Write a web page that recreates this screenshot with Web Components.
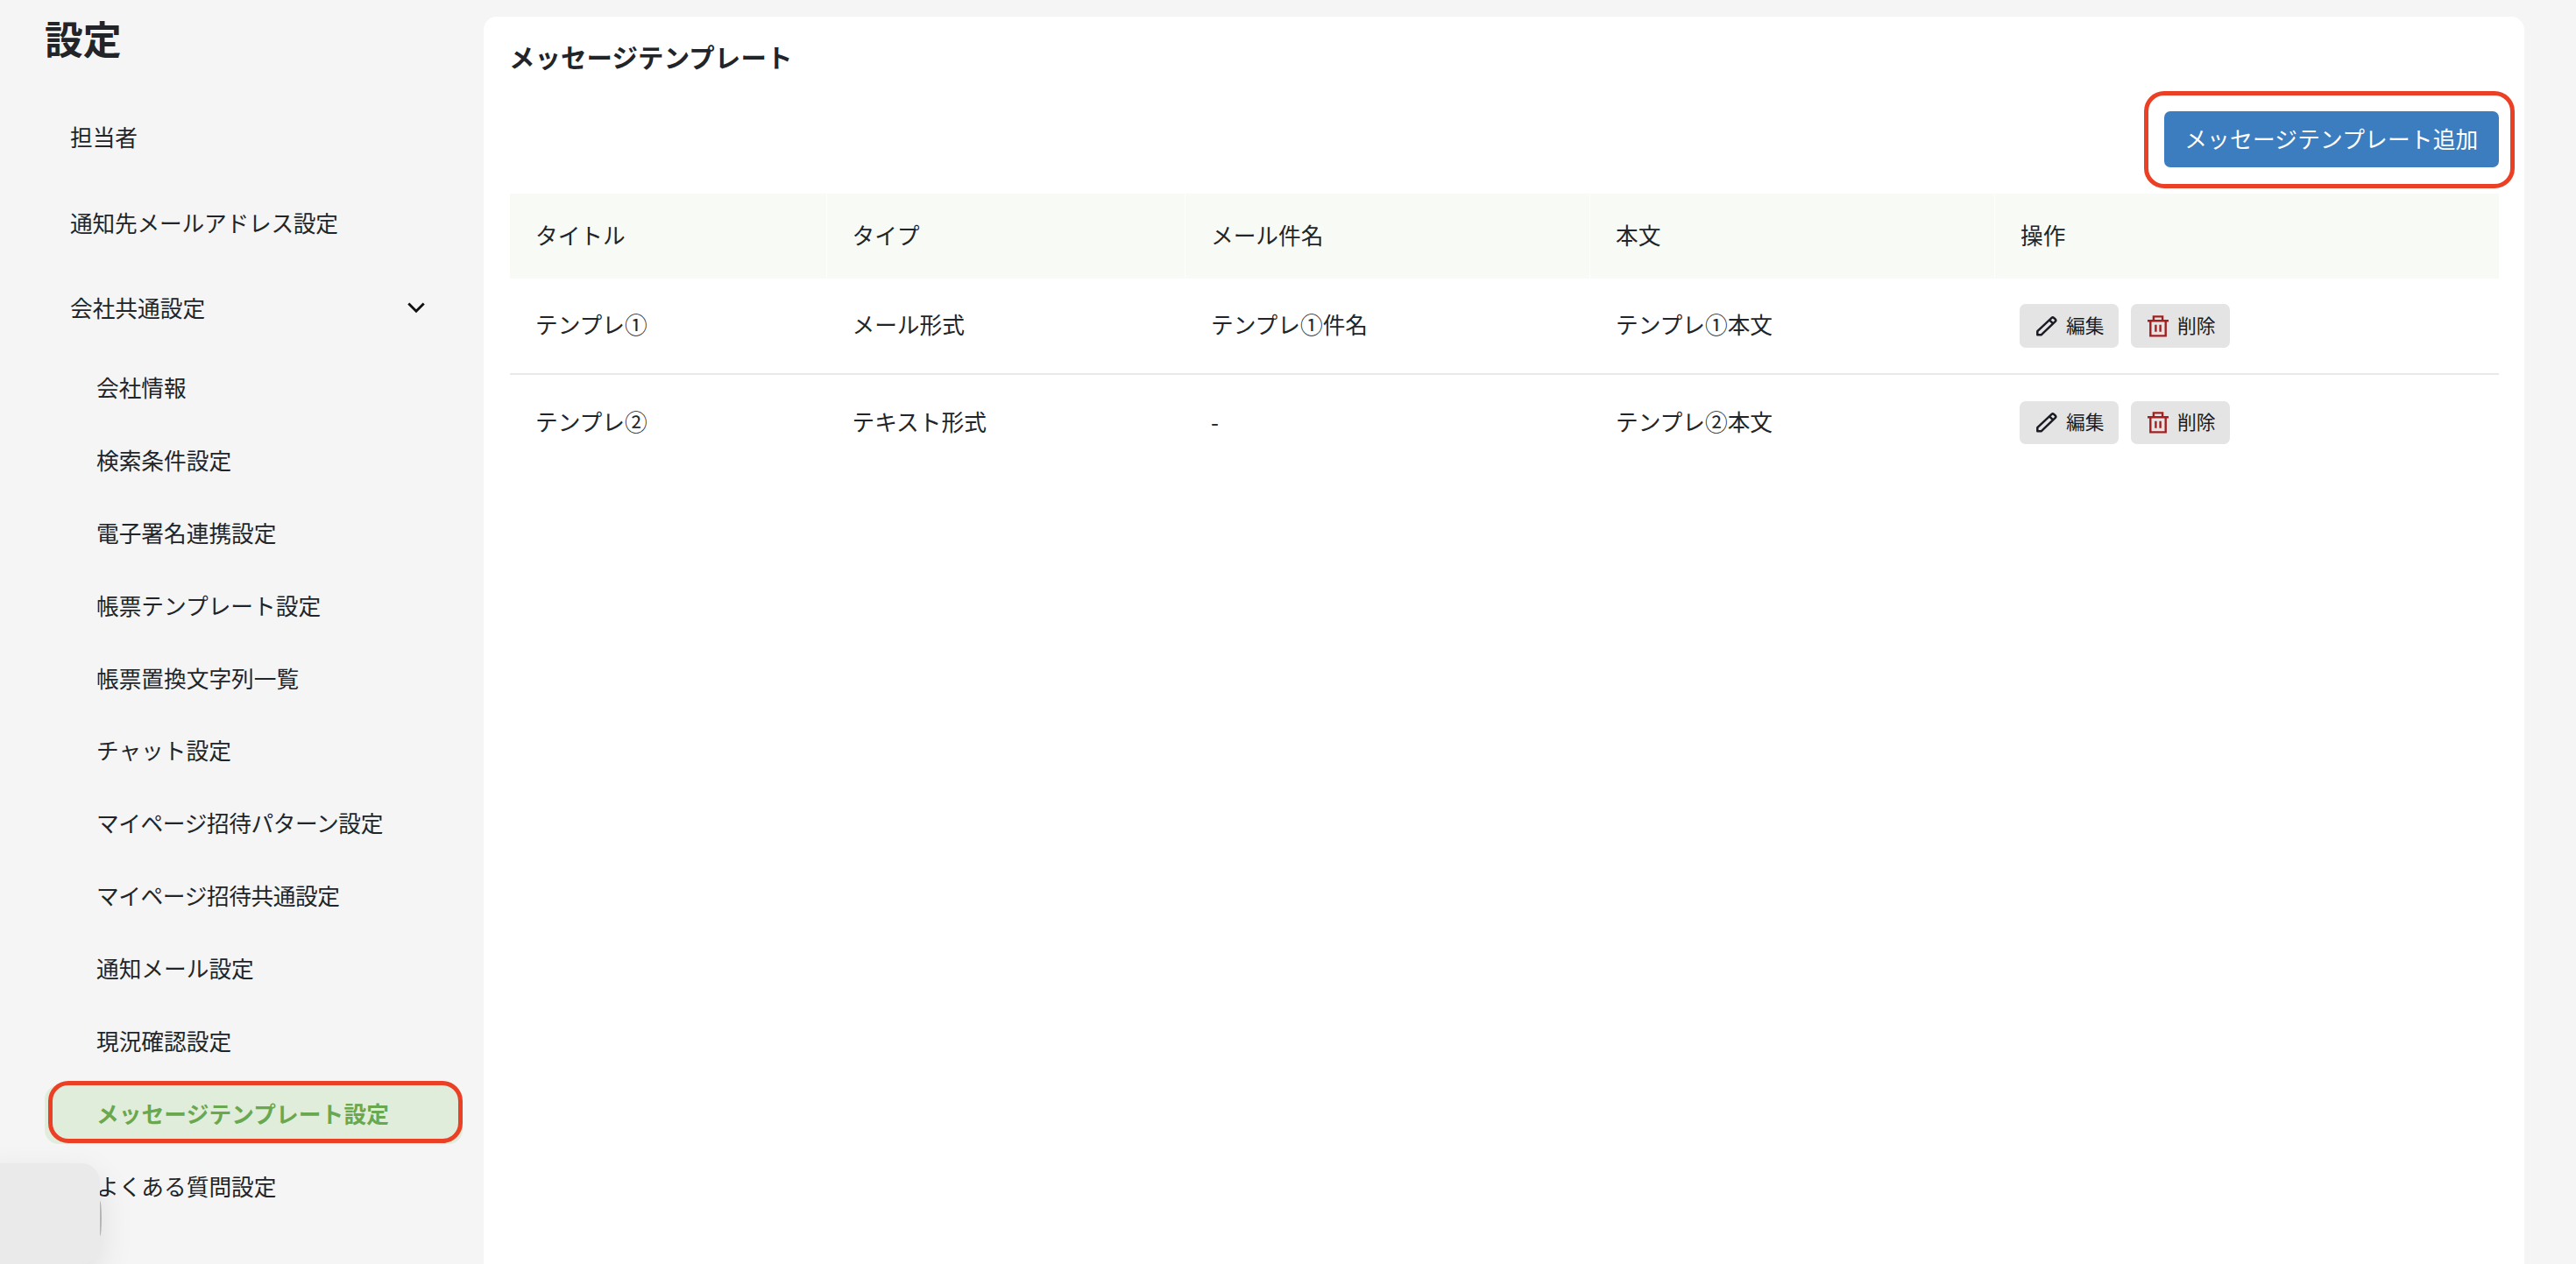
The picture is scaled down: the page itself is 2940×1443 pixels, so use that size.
<!DOCTYPE html>
<html lang="ja">
<head>
<meta charset="utf-8">
<title>設定</title>
<style>
    body {
        margin: 0;
        height: 1443px;
        overflow: hidden;
        background: #f5f5f5;
        color: #212529;
        font-family: "Noto Sans CJK JP", sans-serif;
        font-size: 25.7px;
        line-height: 38px;
        --brand: #6aa84f;
        --brand-soft: #e1eddb;
        --mark: #ea4025;
    }
</style>
</head>
<body>
<settings-page>
    <settings-nav slot="nav"></settings-nav>
    <settings-panel heading="メッセージテンプレート">
        <add-button slot="toolbar">メッセージテンプレート追加</add-button>
        <template-table></template-table>
    </settings-panel>
</settings-page>
<chat-launcher></chat-launcher>

<script>
const icons = {
    chevron: `<svg width="24" height="24" viewBox="0 0 24 24" fill="none" stroke="#111" stroke-width="2.9"><path d="M3.3 7.5 12 16.2l8.7-8.7"/></svg>`,
    edit: `<svg width="28" height="28" viewBox="0 0 28 28" fill="none" stroke="#1b1b24" stroke-width="2.5" stroke-linejoin="round"><path d="M3.3 24.3v-4.1L19.6 4.9q1.2-1.1 2.4 0l1.8 1.6q1.1 1.2 0 2.4L7.6 24.3z"/><path d="m17 7.4 4.2 4"/></svg>`,
    trash: `<svg width="28" height="28" viewBox="0 0 28 28" fill="none" stroke="#a32020" stroke-width="2.4"><path d="M2 8.2h24M8.9 8V3.4h10.2V8M5.3 8.2v17.2h17.4V8.2M11.4 12.7v8M16.6 12.7v8"/></svg>`,
}

class SettingsPage extends HTMLElement {
    constructor() {
        super()
        this.attachShadow({ mode: "open" }).innerHTML = `<style>
            :host {
                display: grid;
                grid-template-columns: 552px 1fr;
                height: 1443px;
                box-sizing: border-box;
                padding-right: 59px;
            }
        </style>
        <slot name="nav"></slot>
        <slot></slot>`
    }
}

class NavItem extends HTMLElement {
    constructor() {
        super()
        this.attachShadow({ mode: "open" }).innerHTML = `<style>
            :host {
                display: flex;
                align-items: center;
                justify-content: space-between;
                box-sizing: border-box;
                height: 97.5px;
                padding: 0 41px 0 29px;
            }

            :host([sub]) {
                height: 82.9px;
                padding: 10px 0 6px;
            }

            :host([tight]) {
                letter-spacing: -.2px;
            }

            :host([sub][tight]) {
                letter-spacing: -.4px;
            }

            .label {
                display: flex;
                align-items: center;
            }

            :host([sub]) .label {
                position: relative;
                flex: 1;
                box-sizing: border-box;
                height: 67px;
                padding: 0 0 3px 59px;
                border-radius: 16px;
            }

            :host([active]) .label {
                background: var(--brand-soft);
                color: var(--brand);
                font-weight: 700;
                letter-spacing: .1px;
            }

            :host([active]) .label::after {
                content: "";
                position: absolute;
                inset: -5px 0 1px 4px;
                border: 5px solid var(--mark);
                border-radius: 23px;
            }

            svg {
                display: block;
            }
        </style>
        <div class="label"><slot></slot></div>
        ${this.hasAttribute("open") ? icons.chevron : ""}`
    }
}

class SettingsNav extends HTMLElement {
    common = [
        "会社情報",
        "検索条件設定",
        "電子署名連携設定",
        "帳票テンプレート設定",
        "帳票置換文字列一覧",
        "チャット設定",
        "マイページ招待パターン設定",
        "マイページ招待共通設定",
        "通知メール設定",
        "現況確認設定",
        "メッセージテンプレート設定",
        "よくある質問設定",
    ]
    active = "メッセージテンプレート設定"

    connectedCallback() {
        this.attachShadow({ mode: "open" }).innerHTML = this.render()
    }

    render() {
        return `<style>
            :host {
                display: block;
                padding: 12px 24px 0 51px;
            }

            h1 {
                margin: 0 0 33.5px;
                font-size: 43.8px;
                line-height: 62px;
            }
        </style>
        <h1>設定</h1>
        <nav>
            <nav-item>担当者</nav-item>
            <nav-item tight>通知先メールアドレス設定</nav-item>
            <nav-item open>会社共通設定</nav-item>
            ${this.common.map(name => this.renderItem(name)).join("")}
        </nav>`
    }

    renderItem(name) {
        const active = name === this.active ? " active" : ""
        const tight = name.startsWith("マイページ") ? " tight" : ""
        return `<nav-item sub${active}${tight}>${name}</nav-item>`
    }
}

class SettingsPanel extends HTMLElement {
    connectedCallback() {
        this.attachShadow({ mode: "open" }).innerHTML = `<style>
            :host {
                display: block;
                margin-top: 19px;
                padding: 25px 29px 0 30px;
                background: #fff;
                border-radius: 15px 15px 0 0;
            }

            h2 {
                margin: 0 0 0 -1px;
                font-size: 29.4px;
                letter-spacing: .15px;
                line-height: 40px;
            }

            .toolbar {
                display: flex;
                justify-content: flex-end;
                margin: 43px 0 29.5px;
            }
        </style>
        <h2>${this.getAttribute("heading")}</h2>
        <div class="toolbar"><slot name="toolbar"></slot></div>
        <slot></slot>`
    }
}

class AddButton extends HTMLElement {
    constructor() {
        super()
        this.attachShadow({ mode: "open" }).innerHTML = `<style>
            :host {
                display: block;
                position: relative;
            }

            :host::after {
                content: "";
                position: absolute;
                inset: -23px -18px -24px -23px;
                border: 5px solid var(--mark);
                border-radius: 23px;
            }

            button {
                display: block;
                height: 64px;
                padding: 0 23.5px 2px 23px;
                border: 0;
                border-radius: 7px;
                background: #3c7dbf;
                color: #fff;
                font: inherit;
                letter-spacing: .2px;
            }
        </style>
        <button><slot></slot></button>`
    }
}

class RowAction extends HTMLElement {
    connectedCallback() {
        this.attachShadow({ mode: "open" }).innerHTML = `<style>
            :host {
                display: block;
            }

            button {
                display: flex;
                align-items: center;
                gap: 8px;
                width: 113px;
                height: 49.5px;
                padding: 0 0 0 17px;
                border: 0;
                border-radius: 7px;
                background: #e4e4e4;
                color: #1b1b24;
                font: inherit;
                font-size: 21.8px;
                line-height: 30px;
                white-space: nowrap;
            }

            span {
                padding-bottom: 2px;
            }
        </style>
        <button>${icons[this.getAttribute("icon")]}<span><slot></slot></span></button>`
    }
}

class TemplateTable extends HTMLElement {
    columns = ["タイトル", "タイプ", "メール件名", "本文", "操作"]
    rows = [
        ["テンプレ①", "メール形式", "テンプレ①件名", "テンプレ①本文"],
        ["テンプレ②", "テキスト形式", "-", "テンプレ②本文"],
    ]

    connectedCallback() {
        this.attachShadow({ mode: "open" }).innerHTML = this.render()
    }

    render() {
        const head = this.columns.map(name => `<div>${name}</div>`)
        const rows = this.rows.map(row => this.renderRow(row))

        return `<style>
            :host {
                display: block;
            }

            .head, .row {
                display: grid;
                grid-template-columns: 361.5px 409.5px 462px 462px 1fr;
                align-items: center;
            }

            .head > div, .row > div {
                padding-left: 29px;
            }

            .head > div {
                box-sizing: border-box;
                height: 97px;
                background: #f8faf5;
                line-height: 94px;
            }

            .head > div:not(:last-child) {
                border-right: 1px solid #fdfefc;
            }

            .row {
                height: 108.5px;
            }

            .row > div:not(.actions) {
                padding-bottom: 3px;
            }

            .row + .row {
                border-top: 2px solid #e9e9e9;
            }

            .row > .actions {
                display: flex;
                gap: 14px;
                padding-left: 28px;
            }
        </style>
        <div class="head">${head.join("")}</div>
        ${rows.join("")}`
    }

    renderRow(row) {
        const cells = row.map(text => `<div>${text}</div>`)
        return `<div class="row">
            ${cells.join("")}
            <div class="actions">
                <row-action icon="edit">編集</row-action>
                <row-action icon="trash">削除</row-action>
            </div>
        </div>`
    }
}

class ChatLauncher extends HTMLElement {
    constructor() {
        super()
        this.attachShadow({ mode: "open" }).innerHTML = `<style>
            :host {
                position: absolute;
                left: -30px;
                top: 1327.5px;
                width: 144px;
                height: 115px;
                border-radius: 21px;
                background: #eaeaea;
                box-shadow: 0 14px 44px -4px rgba(0, 0, 0, .12);
            }

            /* edge of the round button behind the plate */
            :host::after {
                content: "";
                position: absolute;
                left: 100%;
                top: 43px;
                width: 2px;
                height: 40px;
                border-radius: 0 2px 2px 0 / 0 20px 20px 0;
                background: #b4b4b4;
            }
        </style>`
    }
}

customElements.define("settings-page", SettingsPage)
customElements.define("nav-item", NavItem)
customElements.define("settings-nav", SettingsNav)
customElements.define("settings-panel", SettingsPanel)
customElements.define("add-button", AddButton)
customElements.define("row-action", RowAction)
customElements.define("template-table", TemplateTable)
customElements.define("chat-launcher", ChatLauncher)
</script>
</body>
</html>
